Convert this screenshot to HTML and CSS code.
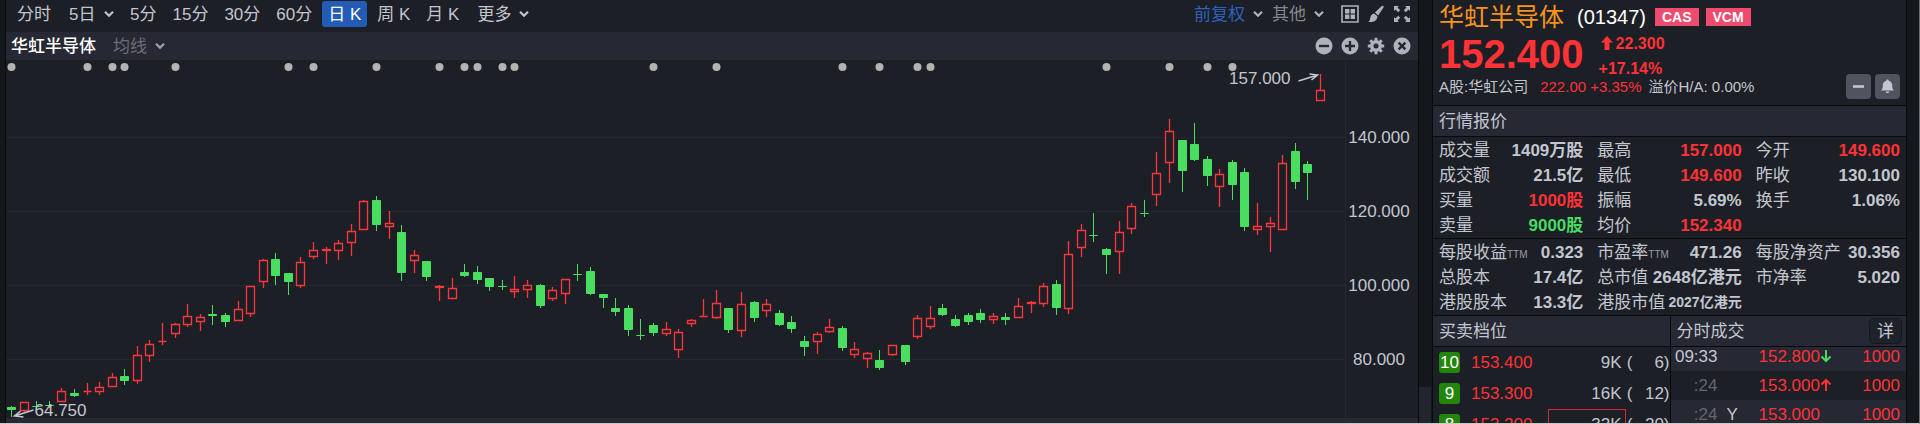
FILE: index.html
```html
<!DOCTYPE html>
<html lang="zh-Hans">
<head>
    <meta charset="UTF-8">
    <meta name="viewport" content="width=device-width, initial-scale=1.0">
    <title>华虹半导体 (01347)</title>
    <link rel="stylesheet" href="styles.css">
</head>
<body>

<svg class="defs" aria-hidden="true">
    <symbol id="chevron" viewBox="0 0 10 8"><path d="M1 1.8l4 4 4-4" fill="none" stroke="currentColor" stroke-width="2.2"/></symbol>
</svg>

<div class="app">
    <main class="chart-panel">
        <nav class="toolbar">
            <div class="periods">
                <button>分时</button>
                <label class="drop"><select aria-label="多日"><option>5日</option></select><svg><use href="#chevron"/></svg></label>
                <button>5分</button>
                <button>15分</button>
                <button>30分</button>
                <button>60分</button>
                <button class="active">日 K</button>
                <button>周 K</button>
                <button>月 K</button>
                <label class="drop"><select aria-label="更多周期"><option>更多</option></select><svg><use href="#chevron"/></svg></label>
            </div>
            <div class="tools">
                <label class="drop adjust"><select aria-label="复权"><option>前复权</option></select><svg><use href="#chevron"/></svg></label>
                <label class="drop other"><select aria-label="其他"><option>其他</option></select><svg><use href="#chevron"/></svg></label>
                <div class="icons">
                    <button class="icon-btn" aria-label="多图">
                        <svg viewBox="0 0 18 18"><path d="M1 1h16v16H1z" fill="none" stroke="currentColor" stroke-width="1.6"/><path d="M4 4h4.4v4.4H4zM9.6 4H14v4.4H9.6zM4 9.6h4.4V14H4zM9.6 9.6H14V14H9.6z" fill="currentColor"/></svg>
                    </button>
                    <button class="icon-btn" aria-label="画线">
                        <svg viewBox="0 0 18 18"><path d="M15.5.8c1 0 1.5.8 1 1.7l-5.3 7.9-3.3-2.8 6.6-6.4c.3-.3.6-.4 1-.4zM7.1 8.4l3.3 2.9c.2 2.6-1.6 4.8-4.4 5.4-1.8.4-3.6.3-4.8 0 1.3-.6 1.7-1.6 1.9-3.3.3-2.6 1.6-4.6 4-5z" fill="currentColor"/></svg>
                    </button>
                    <button class="icon-btn" aria-label="全屏">
                        <svg viewBox="0 0 18 18"><path d="M1 6V1h5L4.500 2.500l2.700 2.700-2 2-2.700-2.700zM12 1h5v5l-1.500-1.500-2.700 2.700-2-2 2.700-2.700zM17 12v5h-5l1.500-1.500-2.700-2.700 2-2 2.700 2.700zM6 17H1v-5l1.500 1.500 2.700-2.700 2 2-2.700 2.700z" fill="currentColor"/></svg>
                    </button>
                </div>
            </div>
        </nav>

        <div class="indicator-bar">
            <strong>华虹半导体</strong>
            <label class="drop"><select aria-label="均线"><option>均线</option></select><svg><use href="#chevron"/></svg></label>
            <div class="icons">
                <button class="icon-btn" aria-label="缩小">
                    <svg viewBox="0 0 18 18"><circle cx="9" cy="9" r="8.5" fill="currentColor"/><path d="M4 9h10" stroke="#262833" stroke-width="2.4"/></svg>
                </button>
                <button class="icon-btn" aria-label="放大">
                    <svg viewBox="0 0 18 18"><circle cx="9" cy="9" r="8.5" fill="currentColor"/><path d="M4 9h10M9 4v10" stroke="#262833" stroke-width="2.4"/></svg>
                </button>
                <button class="icon-btn" aria-label="设置">
                    <svg viewBox="0 0 18 18"><path d="M9 .8v16.4M.8 9h16.400M3.200 3.200l11.600 11.600M14.800 3.200L3.200 14.800" stroke="currentColor" stroke-width="3"/><circle cx="9" cy="9" r="6" fill="currentColor"/><circle cx="9" cy="9" r="2.5" fill="#262833"/></svg>
                </button>
                <button class="icon-btn" aria-label="关闭">
                    <svg viewBox="0 0 18 18"><circle cx="9" cy="9" r="8.5" fill="currentColor"/><path d="M5.600 5.600l6.800 6.800M12.400 5.600l-6.800 6.800" stroke="#262833" stroke-width="2.4"/></svg>
                </button>
            </div>
        </div>

        <div class="plot"><svg id="kline" role="img" aria-label="日K线图"></svg></div>
        <div class="scrollbar"></div>
    </main>

    <div class="gutter"><div class="handle"></div></div>

    <aside class="quote-panel">
        <header class="stock">
            <div class="stock-title">
                <h1>华虹半导体</h1>
                <span class="code">(01347)</span>
                <span class="tag">CAS</span>
                <span class="tag">VCM</span>
            </div>
            <div class="stock-price red">
                <span class="last">152.400</span>
                <div class="change">
                    <span><svg class="arrow" viewBox="0 0 12 14"><path d="M6 0l6 6.500H8.500V14h-5V6.500H0z" fill="currentColor"/></svg>22.300</span>
                    <span>+17.14%</span>
                </div>
            </div>
            <div class="related">
                <span>A股:华虹公司</span>
                <span class="red related-price">222.00 +3.35%</span>
                <span>溢价H/A: 0.00%</span>
                <div class="related-btns">
                    <button aria-label="移除自选"><svg viewBox="0 0 25 25"><path d="M7 12.500h11" stroke="currentColor" stroke-width="2.6"/></svg></button>
                    <button aria-label="提醒"><svg viewBox="0 0 25 25"><path d="M12.500 5.500c.8 0 1.200.5 1.200 1.200 2.300.6 3.500 2.300 3.500 4.800 0 2.500.5 3.800 1.800 5H6c1.300-1.200 1.800-2.500 1.800-5 0-2.500 1.200-4.200 3.500-4.800 0-.7.4-1.200 1.200-1.200zM10.700 17.500h3.600c0 1-.8 1.600-1.800 1.600s-1.800-.6-1.800-1.600z" fill="currentColor"/></svg></button>
                </div>
            </div>
        </header>

        <h2 class="bar">行情报价</h2>
        <dl class="quotes">
            <div><dt>成交量</dt><dd>1409万股</dd></div>
            <div><dt>最高</dt><dd class="red">157.000</dd></div>
            <div><dt>今开</dt><dd class="red">149.600</dd></div>
            <div><dt>成交额</dt><dd>21.5亿</dd></div>
            <div><dt>最低</dt><dd class="red">149.600</dd></div>
            <div><dt>昨收</dt><dd>130.100</dd></div>
            <div><dt>买量</dt><dd class="red">1000股</dd></div>
            <div><dt>振幅</dt><dd>5.69%</dd></div>
            <div><dt>换手</dt><dd>1.06%</dd></div>
            <div><dt>卖量</dt><dd class="green">9000股</dd></div>
            <div><dt>均价</dt><dd class="red">152.340</dd></div>
        </dl>
        <dl class="quotes">
            <div><dt>每股收益<small>TTM</small></dt><dd>0.323</dd></div>
            <div><dt>市盈率<small>TTM</small></dt><dd>471.26</dd></div>
            <div><dt>每股净资产</dt><dd>30.356</dd></div>
            <div><dt>总股本</dt><dd>17.4亿</dd></div>
            <div><dt>总市值</dt><dd>2648亿港元</dd></div>
            <div><dt>市净率</dt><dd>5.020</dd></div>
            <div><dt>港股股本</dt><dd>13.3亿</dd></div>
            <div><dt>港股市值</dt><dd class="long">2027亿港元</dd></div>
        </dl>

        <div class="depth">
            <section>
                <h2 class="bar">买卖档位</h2>
                <table class="book">
                    <tr><td><span class="level">10</span></td><td class="red">153.400</td><td class="qty"><span>9K</span></td><td class="paren">(</td><td class="orders">6)</td></tr>
                    <tr><td><span class="level">9</span></td><td class="red">153.300</td><td class="qty"><span>16K</span></td><td class="paren">(</td><td class="orders">12)</td></tr>
                    <tr><td><span class="level">8</span></td><td class="red">153.200</td><td class="qty"><span class="marked">32K</span></td><td class="paren">(</td><td class="orders">20)</td></tr>
                </table>
            </section>
            <section>
                <h2 class="bar">分时成交<button class="detail">详</button></h2>
                <div class="ticks-view">
                    <table class="ticks">
                        <tr><td class="time">09:33</td><td class="kind"></td><td class="red">152.800<svg class="green" viewBox="0 0 12 14"><path d="M6 1v11M1.500 7.500L6 12l4.500-4.500" fill="none" stroke="currentColor" stroke-width="2"/></svg></td><td class="red vol">1000</td></tr>
                        <tr><td class="time dim">:24</td><td class="kind"></td><td class="red">153.000<svg viewBox="0 0 12 14"><path d="M6 13V2M1.500 6.500L6 2l4.500 4.500" fill="none" stroke="currentColor" stroke-width="2"/></svg></td><td class="red vol">1000</td></tr>
                        <tr><td class="time dim">:24</td><td class="kind">Y</td><td class="red">153.000</td><td class="red vol">1000</td></tr>
                    </table>
                </div>
            </section>
        </div>
    </aside>
</div>

<script src="chart.js"></script>
</body>
</html>
```

FILE: styles.css
```css
* {
    box-sizing: border-box;
}
body {
    margin: 0;
    background-color: #14171c;
    color: #c3c6cf;
    font-family: "Liberation Sans", Arial, "Noto Sans CJK SC", sans-serif;
    font-size: 17px;
    line-height: 25px;
}
h1, h2, dl, dd {
    margin: 0;
    font-weight: normal;
}
button, select {
    margin: 0;
    padding: 0;
    border: none;
    background: none;
    color: inherit;
    font: inherit;
    appearance: none;
    cursor: pointer;
}
table {
    width: 100%;
    border-collapse: collapse;
}
td {
    padding: 0;
    white-space: nowrap;
}
.defs {
    position: absolute;
    width: 0;
    height: 0;
}
.red {
    color: #ff3236;
}
.green {
    color: #46dc62;
}
.app {
    display: flex;
    height: 100vh;
    overflow: hidden;
    padding: 0 12px 0 5px;
    border-right: 1px solid #6d6f74;
    border-bottom: 1px solid #c9c9cc;
}

/* 图表 */
.chart-panel {
    flex: 1;
    min-width: 0;
    display: flex;
    flex-direction: column;
    background-color: #1c1f26;
    border-left: 1px solid #08090c;
    border-right: 1px solid #08090c;
}
.toolbar {
    display: flex;
    justify-content: space-between;
    padding: 1px 7px 5px 3px;
}
.periods, .tools, .icons {
    display: flex;
    align-items: center;
}
.periods button, .periods .drop {
    padding: 0 8px;
    height: 26px;
    white-space: nowrap;
}
.periods .drop {
    padding-left: 10px;
}
.periods .active {
    margin: 0 2px;
    padding: 0 6px;
    background-color: #245bb5;
    border-radius: 3px;
    color: #fff;
}
.drop {
    display: flex;
    align-items: center;
    gap: 8px;
    white-space: nowrap;
}
.drop svg {
    width: 10px;
    height: 8px;
}
.tools {
    gap: 9px;
    color: #b0b2b9;
}
.adjust select {
    color: #2d62bd;
}
.other select {
    color: #85878e;
}
.icons {
    gap: 8px;
}
.tools .icons {
    padding-left: 8px;
}
.icon-btn {
    width: 18px;
    height: 18px;
    color: #b0b2b9;
}
.icon-btn svg {
    display: block;
}
.indicator-bar {
    display: flex;
    align-items: center;
    gap: 17px;
    height: 28px;
    padding: 0 7px 0 5px;
    background-color: #262833;
    color: #a3a5ac;
}
.indicator-bar strong {
    color: #fff;
    font-weight: 500;
}
.indicator-bar select {
    color: #6b6d75;
}
.indicator-bar .icons {
    margin-left: auto;
}
.plot {
    flex: 1;
    min-height: 0;
}
.plot svg {
    display: block;
    width: 100%;
    height: 100%;
}
.grid {
    stroke: #24272d;
}
.up {
    fill: #1c1f26;
    stroke: #fb363c;
    stroke-width: 1.3;
}
.down {
    fill: #4ade61;
    stroke: #4ade61;
}
.event {
    fill: #b2b3b3;
}
.plot text {
    fill: #c3c6cf;
}
.pointer {
    fill: none;
    stroke: #c3c6cf;
    stroke-width: 1.6;
}
.scrollbar {
    height: 5px;
    background-color: #262833;
}
.gutter {
    width: 13px;
    display: flex;
    align-items: flex-end;
}
.handle {
    width: 12px;
    height: 36px;
    background-color: #23252e;
}

/* 报价 */
.quote-panel {
    width: 475px;
    background-color: #1c1f26;
    border-left: 1px solid #08090c;
    border-right: 1px solid #08090c;
}
.stock {
    height: 105px;
    padding: 0 6px;
}
.stock-title {
    display: flex;
    align-items: center;
    height: 34px;
}
.stock-title h1 {
    margin-right: 13px;
    color: #f7941d;
    font-size: 25px;
    line-height: 32px;
}
.code {
    margin-right: 9px;
    color: #fff;
    font-size: 20px;
}
.tag {
    margin-right: 7px;
    padding: 0 7px;
    background-color: #ee4b6e;
    color: #fff;
    font-size: 14px;
    font-weight: bold;
    line-height: 18px;
}
.stock-price {
    display: flex;
    gap: 15px;
    height: 40px;
    font-weight: bold;
}
.last {
    font-size: 40px;
    line-height: 40px;
}
.change {
    display: flex;
    flex-direction: column;
    margin-top: -3px;
    font-size: 16px;
    line-height: 25px;
}
.change .arrow {
    width: 12px;
    height: 14px;
    margin: 0 3px 0 2px;
    vertical-align: -1px;
}
.related {
    display: flex;
    height: 25px;
    font-size: 15px;
    white-space: nowrap;
}
.related-price {
    margin: 0 7px 0 12px;
}
.related-btns {
    display: flex;
    gap: 4px;
    margin-left: auto;
}
.related-btns button {
    width: 25px;
    height: 25px;
    border-radius: 4px;
    background-color: #4f545f;
}
.related-btns svg {
    display: block;
}
.bar {
    display: flex;
    align-items: center;
    justify-content: space-between;
    height: 32px;
    padding: 0 4px 0 6px;
    background-color: #262833;
    border-top: 1px solid #08090c;
    border-bottom: 1px solid #08090c;
    font-size: 17px;
}
.quotes {
    display: grid;
    grid-template-columns: repeat(3, 1fr);
    grid-auto-rows: 25px;
    column-gap: 14px;
    padding: 1px 6px 0;
}
.quotes + .quotes {
    border-top: 1px solid #08090c;
}
.quotes div {
    display: flex;
    justify-content: space-between;
    white-space: nowrap;
}
.quotes dd {
    font-weight: bold;
}
.quotes small {
    color: #9a9ca4;
    font-size: 10px;
    line-height: 10px;
}
.quotes .long {
    font-size: 14px;
}
.depth {
    display: grid;
    grid-template-columns: 1fr 1fr;
}
.depth section + section {
    border-left: 1px solid #08090c;
}
.detail {
    width: 33px;
    height: 26px;
    border: 1px solid #15171c;
    border-radius: 5px;
    background-color: #20222b;
}
.book td {
    height: 31px;
}
.book td:first-child {
    width: 38px;
    padding-left: 6px;
}
.level {
    display: block;
    width: 21px;
    border-radius: 3px;
    background-color: #238609;
    color: #fff;
    line-height: 21px;
    text-align: center;
}
.qty span {
    display: block;
    width: 78px;
    margin-left: auto;
    padding-right: 3px;
    border: 1px solid transparent;
    line-height: 29px;
    text-align: right;
}
.qty .marked {
    border-color: #d3292f;
}
.paren {
    width: 8px;
    text-align: center;
}
.orders {
    width: 36px;
    text-align: right;
}
/* 列表已滚动，首行露出一部分 */
.ticks-view {
    overflow: hidden;
}
.ticks {
    margin-top: -5px;
}
.ticks td {
    height: 29px;
}
.ticks tr:nth-child(odd) {
    background-color: #262833;
}
.ticks svg {
    width: 12px;
    height: 14px;
    vertical-align: -1px;
}
.time {
    width: 47px;
    text-align: right;
}
.dim {
    color: #63666f;
}
.ticks .kind {
    width: 41px;
    padding-left: 9px;
}
.ticks .vol {
    padding-right: 6px;
    text-align: right;
}
```

FILE: chart.js
```js
// 每根K线: [涨r/跌g, 最高, 实体上沿, 实体下沿, 最低]，纵坐标单位为像素
const candles = [
    ['g', 346, 347, 350, 357], ['r', 342, 342, 351, 352], ['g', 341, 346, 347, 349], ['g', 341, 345, 346, 348],
    ['r', 328, 331, 342, 342], ['g', 329, 333, 336, 337], ['r', 323, 331, 332, 335], ['r', 322, 327, 332, 335],
    ['r', 313, 317, 327, 327], ['g', 309, 316, 321, 325], ['r', 286, 295, 321, 324], ['r', 280, 284, 296, 302],
    ['r', 263, 281, 282, 285], ['r', 263, 264, 274, 278], ['r', 244, 256, 265, 267], ['r', 254, 257, 262, 271],
    ['g', 245, 254, 256, 265], ['g', 253, 255, 262, 267], ['r', 241, 249, 261, 261], ['r', 226, 226, 254, 257],
    ['r', 199, 200, 222, 228], ['g', 193, 199, 216, 225], ['g', 213, 213, 222, 235], ['r', 197, 202, 226, 228],
    ['r', 182, 190, 197, 199], ['r', 187, 189, 191, 204], ['r', 180, 183, 191, 200], ['r', 164, 171, 183, 196],
    ['r', 140, 141, 170, 170], ['g', 136, 140, 165, 171], ['r', 151, 163, 167, 179], ['g', 165, 172, 213, 221],
    ['r', 190, 195, 201, 213], ['g', 201, 201, 217, 221], ['r', 225, 226, 228, 241], ['r', 218, 228, 239, 239],
    ['g', 204, 212, 216, 217], ['g', 206, 212, 220, 224], ['g', 218, 218, 227, 231], ['g', 220, 226, 227, 230],
    ['r', 216, 229, 232, 238], ['r', 220, 225, 230, 238], ['g', 224, 225, 246, 248], ['r', 227, 230, 239, 241],
    ['r', 219, 219, 234, 244], ['g', 204, 214, 215, 221], ['g', 207, 211, 234, 235], ['g', 234, 234, 238, 248],
    ['g', 238, 248, 252, 256], ['g', 245, 248, 270, 276], ['g', 259, 275, 276, 280], ['g', 263, 265, 273, 276],
    ['r', 262, 269, 274, 276], ['r', 269, 272, 290, 298], ['r', 259, 260, 264, 267], ['r', 239, 256, 257, 257],
    ['r', 230, 243, 258, 259], ['g', 248, 248, 270, 273], ['r', 232, 244, 271, 277], ['g', 241, 242, 258, 262],
    ['r', 239, 244, 251, 257], ['g', 250, 253, 265, 266], ['g', 256, 262, 269, 273], ['g', 276, 281, 287, 296],
    ['r', 272, 274, 282, 294], ['r', 259, 267, 272, 273], ['g', 266, 268, 288, 291], ['r', 282, 289, 295, 298],
    ['r', 292, 293, 299, 308], ['g', 290, 300, 308, 310], ['r', 285, 285, 295, 296], ['g', 285, 285, 302, 305],
    ['r', 255, 258, 277, 279], ['r', 246, 258, 267, 269], ['g', 244, 248, 255, 256], ['g', 255, 259, 266, 267],
    ['g', 253, 255, 262, 265], ['g', 249, 253, 260, 263], ['r', 253, 256, 260, 264], ['g', 253, 257, 260, 265],
    ['r', 238, 246, 258, 258], ['r', 241, 242, 244, 253], ['r', 223, 226, 244, 247], ['g', 220, 224, 248, 255],
    ['r', 181, 194, 249, 254], ['r', 164, 170, 188, 197], ['g', 153, 175, 176, 182], ['g', 188, 189, 195, 214],
    ['r', 161, 172, 192, 214], ['r', 143, 146, 169, 174], ['g', 140, 153, 154, 157], ['r', 92, 113, 135, 146],
    ['r', 59, 71, 103, 123], ['g', 80, 80, 111, 132], ['g', 63, 84, 100, 101], ['g', 96, 99, 116, 126],
    ['r', 109, 114, 127, 147], ['g', 100, 102, 125, 140], ['g', 108, 112, 167, 171], ['r', 143, 166, 170, 175],
    ['r', 157, 163, 167, 192], ['r', 95, 103, 170, 170], ['g', 83, 91, 122, 129], ['g', 101, 104, 113, 140],
    ['r', 14, 30, 41, 41]
];
// 有事件标记的K线
const events = [0, 6, 8, 9, 13, 22, 24, 29, 34, 36, 37, 39, 40, 51, 56, 66, 69, 72, 73, 87, 92, 95, 97];
const axisWidth = 73;

function priceToY(price) {
    return Math.round(226 - (price - 100) * 3.705);
}

function draw() {
    const svg = document.getElementById('kline');
    const width = svg.clientWidth;
    const height = svg.clientHeight;
    const right = width - axisWidth;
    const step = (right - 30) / (candles.length - 1);
    const xOf = i => Math.round(5 + i * step) + 0.5;
    let out = '';

    for (const price of [140, 120, 100, 80]) {
        const y = priceToY(price);
        out += `<path class="grid" d="M0 ${y - 0.5}H${right}"/>`;
        out += `<text x="${right + 34}" y="${y + 5}" text-anchor="middle">${price}.000</text>`;
    }
    out += `<path class="grid" d="M${right + 0.5} 0V${height}"/>`;

    candles.forEach(([type, high, top, bottom, low], i) => {
        const x = xOf(i);
        const cls = type === 'r' ? 'up' : 'down';
        const h = Math.max(bottom - top - 1, 0);
        out += `<path class="${cls}" d="M${x} ${high}V${low}"/>`;
        out += `<path class="${cls}" d="M${x - 4} ${top + 0.5}h8v${h}h-8z"/>`;
    });

    for (const i of events) {
        out += `<circle class="event" cx="${xOf(i)}" cy="7" r="4"/>`;
    }

    // 最高价和最低价
    const hx = xOf(candles.length - 1);
    const lx = xOf(0);
    out += `<text x="${hx - 30}" y="24" text-anchor="end">157.000</text>`;
    out += `<path class="pointer" d="M${hx - 22} 21L${hx - 3} 15M${hx - 11} 14l8 1l-6 5"/>`;
    out += `<text x="${lx + 23}" y="356">64.750</text>`;
    out += `<path class="pointer" d="M${lx + 22} 350L${lx + 3} 356M${lx + 9} 351l-6 5l9 1"/>`;
    svg.innerHTML = out;
}

window.addEventListener('resize', draw);
draw();
```
